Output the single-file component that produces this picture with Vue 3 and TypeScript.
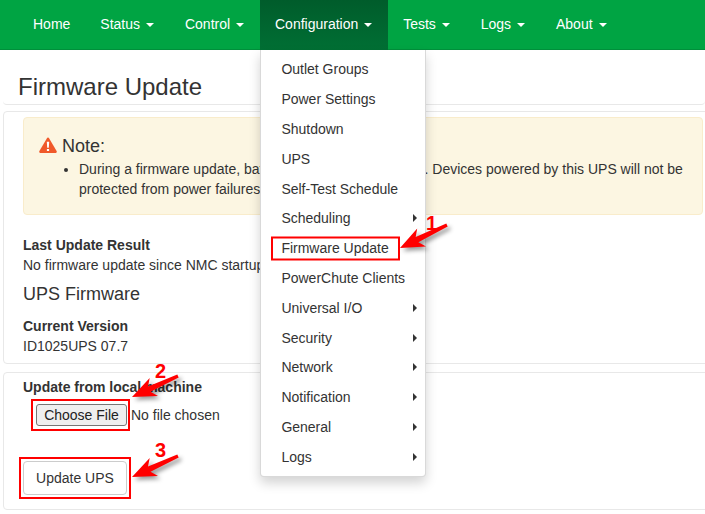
<script setup lang="ts">
interface NavItem { label: string; caret: boolean; active?: boolean }
interface MenuItem { label: string; sub: boolean }

const navItems: NavItem[] = [
  { label: 'Home', caret: false },
  { label: 'Status', caret: true },
  { label: 'Control', caret: true },
  { label: 'Configuration', caret: true, active: true },
  { label: 'Tests', caret: true },
  { label: 'Logs', caret: true },
  { label: 'About', caret: true },
]

const menuItems: MenuItem[] = [
  { label: 'Outlet Groups', sub: false },
  { label: 'Power Settings', sub: false },
  { label: 'Shutdown', sub: false },
  { label: 'UPS', sub: false },
  { label: 'Self-Test Schedule', sub: false },
  { label: 'Scheduling', sub: true },
  { label: 'Firmware Update', sub: false },
  { label: 'PowerChute Clients', sub: false },
  { label: 'Universal I/O', sub: true },
  { label: 'Security', sub: true },
  { label: 'Network', sub: true },
  { label: 'Notification', sub: true },
  { label: 'General', sub: true },
  { label: 'Logs', sub: true },
]

function arrow(tx: number, ty: number, ex: number, ey: number): string {
  const dx = ex - tx
  const dy = ey - ty
  const len = Math.hypot(dx, dy)
  const ux = dx / len
  const uy = dy / len
  const nx = -uy
  const ny = ux
  const at = (along: number, side: number) =>
    `${(tx + ux * along + nx * side).toFixed(1)},${(ty + uy * along + ny * side).toFixed(1)}`
  return [
    at(0, 0),
    at(24, 10),
    at(19, 3),
    at(len, 1.6),
    at(len, -1.6),
    at(19, -3),
    at(24, -10),
  ].join(' ')
}

const arrows = [
  arrow(400, 248, 447, 225),
  arrow(132, 397, 178, 376),
  arrow(132, 477, 178, 456),
]
</script>

<template>
  <div class="page">
    <nav class="navbar">
      <ul class="nav-list">
        <li v-for="item in navItems" :key="item.label" class="nav-item" :class="{ active: item.active }">
          <a class="nav-link">{{ item.label }}<span v-if="item.caret" class="caret"></span></a>
          <ul v-if="item.active" class="menu">
            <li v-for="m in menuItems" :key="m.label" class="menu-item">
              <span>{{ m.label }}</span>
              <span v-if="m.sub" class="sub-arrow"></span>
            </li>
          </ul>
        </li>
      </ul>
    </nav>

    <main class="content">
      <h1 class="title">Firmware Update</h1>

      <section class="panel panel-info">
        <div class="alert">
          <h4 class="alert-title">
            <svg class="warn" width="18" height="16" viewBox="0 0 18 16">
              <path d="M9 .6c.5 0 .9.3 1.2.8l7.4 12.6c.5.9-.1 1.9-1.1 1.9H1.5C.5 15.900-.1 14.900.4 14L7.800 1.400C8.100.9 8.500.6 9 .6z" fill="#f0592a" />
              <path d="M7.800 4.800h2.400l-.4 6H8.200zM7.900 11.900h2.200v2H7.900z" fill="#fff" />
            </svg>
            <span>Note:</span>
          </h4>
          <ul class="alert-list">
            <li>During a firmware update, battery backup is unavailable. Devices powered by this UPS will not be protected from power failures during the update.</li>
          </ul>
        </div>

        <div class="result">
          <div class="label">Last Update Result</div>
          <div>No firmware update since NMC startup</div>
        </div>
        <h3 class="section-title">UPS Firmware</h3>
        <div class="version">
          <div class="label">Current Version</div>
          <div>ID1025UPS 07.7</div>
        </div>
      </section>

      <section class="panel panel-upload">
        <div class="label">Update from local machine</div>
        <div class="file-row">
          <button type="button" class="file-btn">Choose File</button>
          <span class="file-name">No file chosen</span>
        </div>
        <button type="button" class="update-btn">Update UPS</button>
      </section>
    </main>

    <svg class="overlay" width="705" height="514" viewBox="0 0 705 514">
      <rect x="272" y="237.500" width="127" height="22" class="mark" />
      <rect x="32" y="400" width="97" height="30" class="mark" />
      <rect x="20" y="458" width="110" height="40" class="mark" />
      <polygon v-for="(p, i) in arrows" :key="i" :points="p" class="arrow" />
      <text x="426" y="230" class="num">1</text>
      <text x="155" y="378" class="num">2</text>
      <text x="155" y="457" class="num">3</text>
    </svg>
  </div>
</template>

<style>
html, body { margin: 0; padding: 0; background: #fff; }
</style>

<style scoped>
.page {
  position: relative;
  width: 705px;
  height: 514px;
  overflow: hidden;
  background: #fff;
  color: #333;
  font-family: "Liberation Sans", Arial, sans-serif;
  font-size: 14px;
  line-height: 20px;
}
.navbar {
  height: 50px;
  box-sizing: border-box;
  background: #00a443;
  border-bottom: 1px solid #008f3b;
}
.nav-list {
  display: flex;
  margin: 0;
  padding: 0 0 0 18px;
  list-style: none;
}
.nav-item { position: relative; }
.nav-link {
  display: block;
  height: 50px;
  box-sizing: border-box;
  padding: 14px 15px;
  color: #fff;
  white-space: nowrap;
}
.nav-item.active .nav-link {
  background: linear-gradient(#005c2b, #006f34);
}
.caret {
  display: inline-block;
  margin: 0 0.9px 0 6px;
  vertical-align: middle;
  border-top: 4px solid #fff;
  border-left: 4px solid transparent;
  border-right: 4px solid transparent;
}
.menu {
  position: absolute;
  top: 50px;
  left: 0;
  z-index: 5;
  width: 166px;
  box-sizing: border-box;
  margin: 0;
  padding: 4.5px 0 4.3px;
  list-style: none;
  background: #fff;
  border: 1px solid rgba(0, 0, 0, 0.15);
  border-top: 0;
  border-radius: 0 0 4px 4px;
  box-shadow: 0 6px 12px rgba(0, 0, 0, 0.175);
}
.menu-item {
  display: flex;
  align-items: center;
  justify-content: space-between;
  height: 29.8px;
  padding: 0 8px 0 20.4px;
  white-space: nowrap;
}
.sub-arrow {
  border-left: 4px solid #333;
  border-top: 4px solid transparent;
  border-bottom: 4px solid transparent;
}
.content { padding-left: 3px; }
.title {
  height: 55px;
  box-sizing: border-box;
  margin: 0 0 6px;
  padding: 23px 0 0 15px;
  font-size: 24px;
  font-weight: 400;
  line-height: 28px;
  color: #333;
  border-bottom: 1px solid #e8e8e8;
  border-radius: 0 0 4px 4px;
}
.panel {
  box-sizing: border-box;
  width: 720px;
  border: 1px solid #e8e8e8;
  border-radius: 4px;
  padding-left: 19px;
}
.panel-info {
  height: 253px;
  padding-top: 5px;
  margin-bottom: 8px;
}
.panel-upload {
  height: 138px;
  padding-top: 4px;
}
.alert {
  box-sizing: border-box;
  width: 680px;
  height: 98px;
  padding: 15px;
  background: #fcf6e2;
  border: 1px solid #f9eccb;
  border-radius: 4px;
}
.alert-title {
  display: flex;
  align-items: center;
  gap: 5px;
  height: 26px;
  margin: 0;
  font-size: 18px;
  font-weight: 400;
}
.warn { flex: none; margin-top: -3px; }
.alert-list {
  margin: 0;
  padding-left: 40px;
}
.result { margin-top: 20px; }
.label { font-weight: 700; }
.section-title {
  margin: 9px 0 12px;
  font-size: 18px;
  font-weight: 400;
  line-height: 20px;
}
.file-row {
  display: flex;
  align-items: center;
  gap: 4px;
  height: 22px;
  margin: 7px 0 0 13px;
}
.file-btn {
  box-sizing: border-box;
  width: 91px;
  height: 22px;
  padding: 0;
  font: inherit;
  color: #222;
  background: #efefef;
  border: 1px solid #767676;
  border-radius: 3px;
}
.file-name { color: #333; }
.update-btn {
  display: block;
  box-sizing: border-box;
  width: 104px;
  height: 34px;
  margin-top: 35px;
  padding: 0;
  font: inherit;
  color: #333;
  background: #fff;
  border: 1px solid #ccc;
  border-radius: 4px;
}
.overlay {
  position: absolute;
  top: 0;
  left: 0;
  z-index: 10;
  pointer-events: none;
}
.mark {
  fill: none;
  stroke: #f00;
  stroke-width: 2;
}
.arrow {
  fill: #f00;
  filter: drop-shadow(3px 3px 2px rgba(0, 0, 0, 0.4));
}
.num {
  font-family: "Liberation Sans", Arial, sans-serif;
  font-size: 20px;
  font-weight: 700;
  fill: #f00;
}
</style>
